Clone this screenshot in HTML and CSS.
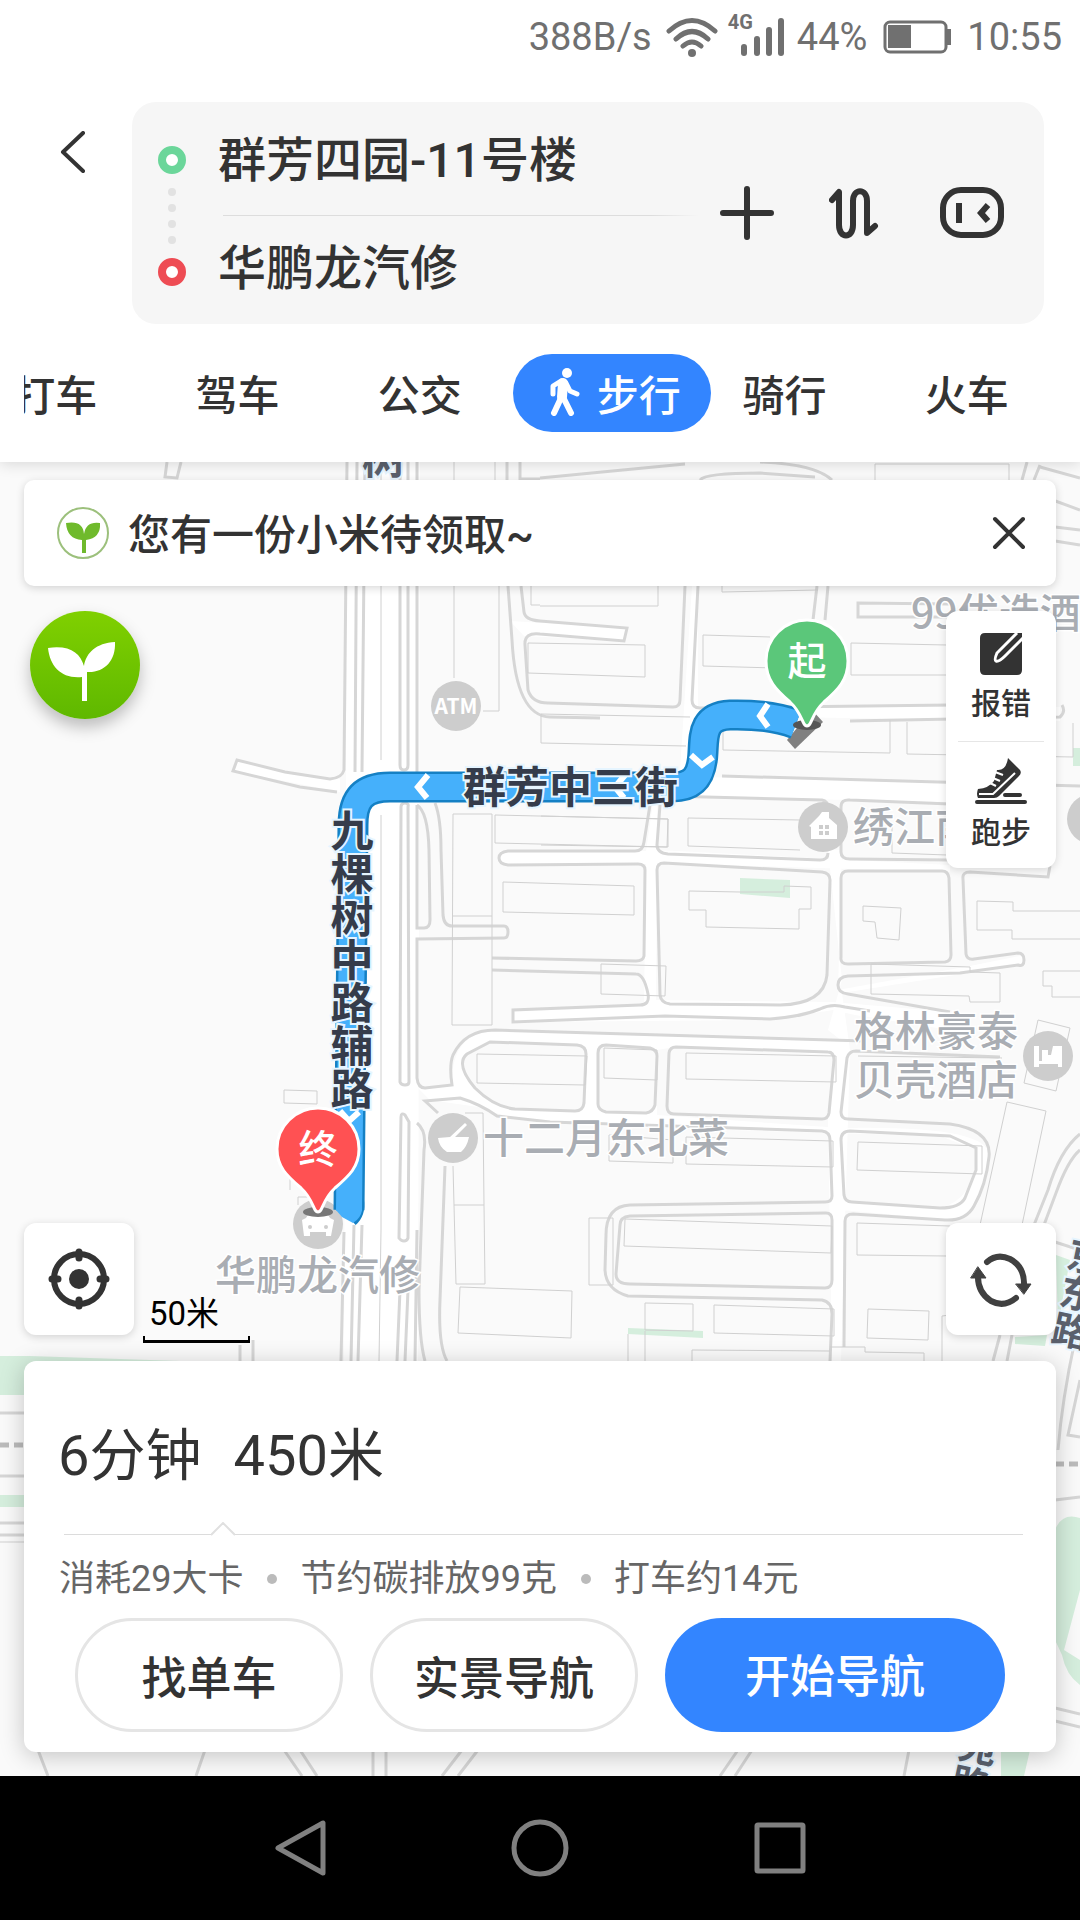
FILE: index.html
```
<!DOCTYPE html>
<html lang="zh-CN">
<head>
    <meta charset="UTF-8">
    <meta name="viewport" content="width=device-width, initial-scale=1.0">
    <title>步行路线</title>
    <link rel="stylesheet" href="styles.css">
</head>
<body>
    <header class="header">
        <div class="status">
            <span>388B/s</span>
            <svg class="wifi" width="52" height="40" viewBox="0 0 52 40" fill="none" stroke="#707070" stroke-width="5" stroke-linecap="round">
                <path d="M3 14Q26-7 49 14M10 22Q26 7 42 22M17 29Q26 21 35 29"/>
                <circle cx="26" cy="36" r="4" fill="#707070" stroke="none"/>
            </svg>
            <div class="signal">
                <b>4G</b>
                <svg width="44" height="38" viewBox="0 0 44 38" fill="#707070">
                    <rect x="0" y="26" width="6" height="12" rx="3"/>
                    <rect x="13" y="18" width="6" height="20" rx="3"/>
                    <rect x="25" y="9" width="6" height="29" rx="3"/>
                    <rect x="37" y="0" width="6" height="38" rx="3"/>
                </svg>
            </div>
            <span>44%</span>
            <svg class="battery" width="68" height="34" viewBox="0 0 68 34">
                <rect x="2" y="2" width="61" height="30" rx="5" fill="none" stroke="#707070" stroke-width="3"/>
                <path d="M5 5h23v23h-23zM64 9h4v16h-4z" fill="#707070"/>
            </svg>
            <span>10:55</span>
        </div>
        <div class="search">
            <button class="back" aria-label="返回">
                <svg width="26" height="42" viewBox="0 0 26 42" fill="none" stroke="#333" stroke-width="4" stroke-linecap="round" stroke-linejoin="round"><path d="M23 2L3 21L23 40"/></svg>
            </button>
            <div class="searchBox">
                <div class="points">
                    <i class="ring green"></i>
                    <i class="dot"></i><i class="dot"></i><i class="dot"></i><i class="dot"></i>
                    <i class="ring red"></i>
                </div>
                <div class="fields">
                    <input type="text" value="群芳四园-11号楼" aria-label="起点">
                    <div class="line"></div>
                    <input type="text" value="华鹏龙汽修" aria-label="终点">
                </div>
                <div class="actions">
                    <button aria-label="添加途经点">
                        <svg width="56" height="56" viewBox="0 0 56 56" stroke="#333" stroke-width="6" stroke-linecap="round"><path d="M28 4V52M4 28H52"/></svg>
                    </button>
                    <button aria-label="交换起终点">
                        <svg width="50" height="52" viewBox="0 0 50 52" fill="none" stroke="#333" stroke-width="6" stroke-linecap="round" stroke-linejoin="round"><path d="M3 13L10 5V38C10 52 24 52 24 38V14C24 1 38 1 38 14V46L46 39"/></svg>
                    </button>
                    <button aria-label="语音助手">
                        <svg width="66" height="52" viewBox="0 0 66 52" fill="none" stroke="#333" stroke-width="6"><rect x="4" y="3" width="58" height="45" rx="18"/><path d="M20 16V36M49 18L42 26L49 34"/></svg>
                    </button>
                </div>
            </div>
        </div>
        <nav class="tabs">
            <ul>
                <li><a href="#">打车</a></li>
                <li><a href="#">驾车</a></li>
                <li><a href="#">公交</a></li>
                <li><a href="#" class="active">
                    <svg width="30" height="48" viewBox="0 0 30 48" fill="none" stroke="#fff" stroke-linecap="round" stroke-linejoin="round"><circle cx="17" cy="5" r="5" fill="#fff" stroke="none"/><path d="M13 15L12 29" stroke-width="10"/><path d="M11 13L3 18V26M16 15L20 23L27 26" stroke-width="5"/><path d="M11 30L4 45M13 29L21 45" stroke-width="6"/></svg>
                    <span>步行</span>
                </a></li>
                <li><a href="#">骑行</a></li>
                <li><a href="#">火车</a></li>
            </ul>
        </nav>
    </header>

    <main class="map">
        <svg class="mapPic" viewBox="0 462 1080 1314" preserveAspectRatio="xMidYMin slice">
            <!-- 绿地 -->
            <g class="park">
                <path d="M740 878L790 880V898L740 894Z"/>
                <path d="M628 1328L703 1331V1338L628 1334Z"/>
                <path d="M0 1356H30L180 1361V1395H0ZM0 1495H24V1507H0Z"/>
                <path d="M1056 1255L1070 1260L1058 1325ZM1015 1337L1047 1335L1045 1346L1015 1344Z"/>
                <path d="M1055 1530Q1062 1512 1080 1518V1590L1064 1650L1080 1660V1685Q1066 1675 1062 1655L1055 1640ZM1001 1750H1030L1024 1776H1001ZM1073 748H1080V766H1073Z"/>
            </g>
            <!-- 白色路面 -->
            <g class="ground">
                <path d="M347 462L344 1361H418L420 462Z"/>
                <path d="M237 760L285 772L340 779V792L233 771ZM510 621L627 628L624 641L524 636ZM692 586H698V707L1060 707V721L715 716L698 777L950 782V802L657 796V850L950 865V872L657 863L656 1000L832 1002L950 1012V1030L855 1015L833 1010L770 1020L513 1022V1010L644 1004L646 864H500V851H646L654 796H420V770H680Z"/>
                <path d="M828 850H842L838 990L970 966L1024 955V964L842 993L850 1050L841 1361H832L828 1118L834 1055L680 1046L657 1050V1115L842 1128Q1000 1125 988 1160Q982 1220 950 1220L842 1210V1202L940 1208Q975 1200 977 1150L940 1136L660 1128Q510 1125 485 1108L430 1100L418 1088L452 1084Q451 1030 500 1030L842 1041L828 1030L842 980Z"/>
            </g>
            <!-- 环路里的地块 -->
            <path fill="#fafafa" d="M490 1042L577 1045Q586 1046 586 1054L584 1103Q583 1111 575 1111L515 1109Q494 1107 475 1088Q455 1064 467 1054ZM606 1045L650 1048Q657 1050 657 1056L655 1105Q653 1112 646 1113L606 1112Q598 1110 598 1104V1053Q598 1045 606 1045Z"/>
            <!-- 道路边线 -->
            <g class="road">
                <path d="M167 462L165 477L177 478L181 462M347 462L344 770Q342 778 330 779L285 772L237 760L233 771L300 787L337 792M357 462L355 772M365 462L362 772M400 462V765Q400 770 404 770T408 765V462M417 462V772M507 462V480M520 462V479H540"/>
                <path d="M508 586L512 640Q516 716 550 717L600 718M521 586L524 612Q525 620 540 621L627 628L624 641L540 634Q524 632 525 645L528 690Q532 703 548 703L673 707Q680 707 680 700L685 586M698 586L692 700Q692 708 700 708L950 705M850 721L1060 717Q1066 712 1062 705M817 586L813 620M828 586L825 620M950 604L858 603V617L950 617"/>
                <path d="M540 478L685 464M700 480Q705 473 760 473L815 477M760 462Q815 464 832 480M1027 462L1022 480M1040 465L1034 480M1040 467L1080 478M1050 499L1080 510M1055 527L1080 530M1055 541L1080 545"/>
                <path d="M722 776L1080 786M667 796L822 800Q828 801 828 808M650 805L644 842Q643 851 635 851H508Q499 852 499 858T508 865L638 864Q645 864 645 870L644 956Q643 961 636 961L492 958M660 805L657 845Q657 853 668 854L820 860Q828 860 828 853M950 804L850 800Q841 799 841 807V852Q841 859 850 859L950 860"/>
                <path d="M664 863L822 872Q830 873 830 880L827 975Q824 1004 780 1005L670 1004Q661 1003 660 995L657 870Q657 863 664 863ZM848 871H942Q948 871 949 878L951 955Q951 961 945 962L848 964Q840 964 841 957V878Q841 871 848 871ZM1050 866L1048 877L970 872Q962 872 963 879L966 954Q967 960 974 959L1018 953Q1024 953 1024 960T1018 965L960 973L848 976Q838 977 838 985Q838 993 848 994L950 1012"/>
                <path d="M492 970L636 974Q644 974 648 994Q650 1005 640 1005L513 1010V1022L665 1016L770 1019Q800 1017 820 1009Q832 1003 845 1007L870 1011"/>
                <path d="M401 807Q401 803 405 803T408 807L409 1082Q409 1085 405 1085T400 1082ZM417 805Q428 812 429 850L430 920Q430 928 424 928H417V805M435 803Q441 818 441 850L443 915Q444 926 452 926H504Q508 926 508 932T504 938L417 939V1078Q418 1088 425 1088L452 1085Q449 1065 453 1055Q465 1030 495 1030L865 1041"/>
                <path d="M490 1042L577 1045Q586 1046 586 1054L584 1103Q583 1111 575 1111L515 1109Q494 1107 475 1088Q455 1064 467 1054ZM606 1045L650 1048Q657 1050 657 1056L655 1105Q653 1112 646 1113L606 1112Q598 1110 598 1104V1053Q598 1045 606 1045ZM676 1047L828 1052Q834 1052 834 1060L829 1113Q828 1119 822 1119L674 1114Q667 1114 667 1106L669 1053Q670 1047 676 1047Z"/>
                <path d="M1000 1057L856 1051Q849 1051 847 1058L841 1112Q841 1119 848 1119L950 1124Q992 1130 989 1157Q986 1185 974 1206Q966 1221 945 1220L853 1214Q845 1214 845 1221L844 1347M850 1131L950 1136L976 1148V1170L965 1198Q960 1208 940 1208L852 1202Q845 1202 844 1195L841 1140Q841 1131 850 1131Z"/>
                <path d="M438 1113L425 1101L460 1098Q480 1104 497 1116L550 1122L822 1131Q830 1132 830 1140L832 1196Q832 1202 825 1202L630 1205Q606 1206 606 1235L605 1270Q606 1290 628 1296L822 1300Q832 1302 832 1314L830 1361M630 1216L826 1213Q832 1213 832 1220V1280Q832 1288 825 1288L630 1284Q616 1284 616 1274L620 1225Q620 1217 630 1216Z"/>
                <path d="M401 1117Q401 1112 405 1115L409 1122L408 1238Q407 1241 404 1241T399 1238ZM417 1123Q427 1131 424 1150L419 1290Q419 1340 425 1361M445 1166L440 1300Q438 1345 447 1361M344 1232L341 1361M354 1225L351 1361M362 1225L358 1361M400 1290L397 1361M408 1290L405 1361M417 1230L415 1361M240 1345V1361M253 1340V1361"/>
                <path d="M1080 1134Q1060 1150 1048 1190L1034 1225M1080 1150Q1068 1160 1056 1193L1044 1225M1055 1242L1080 1250M1000 1335L993 1361M1012 1335L1007 1361M1075 1340Q1062 1400 1058 1450M1080 1380L1068 1435L1080 1437M1055 1500L1080 1497M1055 1708L1080 1714M1055 1721L1080 1727"/>
                <path d="M0 1413H24M0 1476H24M0 1523H24M0 1535H24M38 1750L48 1776M205 1750L196 1776M284 1750L302 1776M300 1750L317 1776M373 1750V1776M386 1750V1776M462 1750L442 1776M478 1750L458 1776M738 1750L720 1776M752 1750L735 1776M909 1750L904 1776"/>
            </g>
            <path d="M0 1445H24M1055 1464H1080" stroke="#bbb" stroke-width="5" stroke-dasharray="9 5"/>
            <!-- 建筑 -->
            <g class="house">
                <path d="M381 462V760M381 815V1230L379 1361M454 462V678M495 462V480M499 586V711H483M540 606L658 606V586M722 586V592L818 590M531 480V605H540M528 643L645 645V677L528 673ZM770 637L703 635V666L775 668M851 643L947 645M851 643V675H947"/>
                <path d="M690 717L541 714V743L686 746M723 730V750L890 753V720M907 722V754L1073 757V723M541 816L668 819V847L541 845M800 820L688 818V846L800 850M892 825V853L947 855M875 480V464H1009V480"/>
                <path d="M689 891L740 892L784 892V886L811 887V909H799V929L706 927V910H689ZM863 906L901 908L899 940L877 938L875 922L863 921ZM1080 911H1013V902L977 901V930H1012V939H1080M871 964L970 967V972L1000 973V1002H970L969 996L871 994ZM1080 971H1043V986H1052V997H1080"/>
                <path d="M453 814L492 814V1025H452ZM452 916H492M495 815L668 819L667 847L495 843ZM503 882L634 886V915L503 912ZM601 964L666 966L665 996L601 994ZM477 1054L587 1056L585 1085L477 1083ZM604 1048L657 1050V1080L604 1078ZM686 1053L836 1056V1082L686 1079ZM858 1142L982 1146V1174L857 1170ZM686 1137L833 1141V1167L686 1164ZM609 1135V1161L673 1163V1140ZM858 1056L1002 1058"/>
                <path d="M1007 1102L1046 1111L1022 1225M1007 1102L980 1225M1038 1020L1070 1028L1056 1091L1024 1083ZM625 1219L832 1226L831 1253L624 1246ZM589 1218H613V1285H589ZM950 1226L857 1223V1255L947 1256M645 1303L693 1304V1331L645 1330ZM714 1305L834 1309V1336L714 1333ZM868 1309L929 1311L928 1340L867 1338ZM628 1334V1361M645 1331V1361M692 1361V1350L830 1351M830 1347H865V1352L924 1353V1361M942 1361V1316L950 1315"/>
                <path d="M284 1090L317 1091V1104L284 1103ZM453 1166L454 1205H484L483 1113H465M454 1205L456 1284H485L484 1205M460 1287L572 1291L571 1338L458 1333ZM290 1190V1175M298 1205V1197H310M0 1542H24"/>
            </g>
            <!-- 兴趣点 -->
            <g class="poi">
                <circle cx="456" cy="706" r="25"/><text class="atm" x="456" y="714">ATM</text>
                <circle cx="823" cy="827" r="25"/><path d="M809 826L819 816L822 812H829V818L837 825V839H811V827Z"/>
                <circle cx="1048" cy="1056" r="25"/><path d="M1034 1046H1039V1061H1042V1050H1048V1055H1051L1053 1046H1062V1067H1058V1064H1039V1067H1034Z"/>
                <circle cx="453" cy="1138" r="25"/><path d="M438 1138L450 1137L465 1123L467 1125L455 1137H469Q467 1147 461 1152H447Q439 1147 438 1138Z"/>
                <circle cx="318" cy="1224" r="25"/><path d="M306 1218L309 1213H327L330 1218L334 1220L331 1236H326V1232H310V1236H304L302 1220Z"/>
                <circle cx="1092" cy="819" r="25"/>
            </g>
            <g fill="#cdcdcd"><path d="M819 825h4v4h-4zM825 825h4v4h-4zM819 831h4v4h-4zM825 831h4v4h-4z"/><circle cx="310" cy="1227" r="2"/><circle cx="326" cy="1227" r="2"/></g>
            <g class="name">
                <text x="911" y="628">99优选酒店</text>
                <text x="853" y="842">绣江南</text>
                <text x="854" y="1046">格林豪泰</text>
                <text x="854" y="1095">贝壳酒店</text>
                <text x="483" y="1153">十二月东北菜</text>
                <text x="215" y="1290">华鹏龙汽修</text>
            </g>
            <!-- 路线 -->
            <path d="M787 740L795 749L823 722L812 710Z" fill="#808080"/>
            <g class="route">
                <path class="edge" d="M796 724Q770 714 730 715C703 716 704 735 703 752C702 775 695 787 672 787H390C362 787 353 800 353 825L349 1210"/>
                <path class="edge" d="M360 1200Q362 1214 353 1222" stroke-width="8"/>
                <path class="fill" d="M796 724Q770 714 730 715C703 716 704 735 703 752C702 775 695 787 672 787H390C362 787 353 800 353 825L349 1211"/>
                <path class="end" d="M336 1210H362Q361 1218 353 1223L342 1217Z"/>
                <path class="arrow" d="M768 704L760 716L768 727M691 755L702 765L713 757M428 775L418 787L427 798M625 775L615 787L624 798M340 1111L349 1121L359 1112"/>
            </g>
            <g class="street">
                <text x="463" y="803">群芳中三街</text>
                <text class="vertical" x="352" y="809">九棵树中路辅路</text>
                <text class="light" x="362" y="474">树</text>
                <text class="vertical light small" transform="translate(1091 1238) rotate(12)">京东路</text>
                <text class="vertical light small" transform="translate(982 1728) rotate(12)">苑路</text>
            </g>
            <!-- 起点终点 -->
            <ellipse cx="807" cy="725" rx="14" ry="5" fill="#555"/>
            <ellipse cx="318" cy="1212" rx="15" ry="5" fill="#777"/>
            <g class="pin">
                <path fill="#5bc77a" d="M807 726C802 726 803 714 790 702C776 690 766 680 766 661A41 41 0 0 1 848 661C848 680 838 690 824 702C811 714 812 726 807 726Z"/>
                <path fill="#ff5153" d="M318 1212C313 1212 314 1200 301 1188C287 1176 277 1167 277 1149A41 41 0 0 1 359 1149C359 1167 349 1176 335 1188C322 1200 323 1212 318 1212Z"/>
                <text x="807" y="675">起</text>
                <text x="318" y="1163">终</text>
            </g>
        </svg>

        <div class="notice">
            <svg width="54" height="54" viewBox="0 0 54 54"><circle cx="27" cy="27" r="25" fill="none" stroke="#9cc07c" stroke-width="2"/><path d="M10 17Q27 14 28 28Q30 15 44 17Q45 32 30 34V47H26V34Q11 33 10 17Z" fill="#6fba2c"/></svg>
            <p>您有一份小米待领取~</p>
            <button aria-label="关闭">
                <svg width="34" height="34" viewBox="0 0 34 34" stroke="#333" stroke-width="4" stroke-linecap="round"><path d="M3 3L31 31M31 3L3 31"/></svg>
            </button>
        </div>

        <div class="tools">
            <button class="sprout" aria-label="小米">
                <svg width="110" height="108" viewBox="0 0 110 108" fill="#fff"><path d="M18 37C40 34 50 42 54 55C56 42 66 32 85 31C86 50 74 62 57 61V90H52V66C32 68 20 56 18 37Z"/></svg>
            </button>
            <div class="panel">
                <button>
                    <svg width="44" height="44" viewBox="0 0 44 44"><path d="M6 1H43V38Q43 43 38 43H6Q1 43 1 38V6Q1 1 6 1Z" fill="#333"/><path d="M38 1L18 21Q15 28 17 29Q20 30 26 24L44 6" fill="none" stroke="#fff" stroke-width="3"/></svg>
                    <span>报错</span>
                </button>
                <button>
                    <svg width="52" height="48" viewBox="0 0 52 48" fill="#333"><path d="M33 1L45 13Q47 16 44 19L24 39Q22 41 19 41H3Q1 37 3 32Q14 31 19 24L22 13Q31 14 33 1Z"/><path d="M20 15L28 18M18 21L25 24M15 26L21 29M4 37H18L40 16" stroke="#fff" stroke-width="2" fill="none"/><path d="M30 38H45M2 45H50" stroke="#333" stroke-width="4" stroke-linecap="round"/></svg>
                    <span>跑步</span>
                </button>
            </div>
        </div>

        <div class="bottomTools">
            <button class="square" aria-label="定位">
                <svg width="62" height="62" viewBox="0 0 62 62" fill="none" stroke="#333" stroke-width="6"><circle cx="31" cy="31" r="25"/><circle cx="31" cy="31" r="10" fill="#333" stroke="none"/><path d="M31 4V10M31 52V58M4 31H10M52 31H58" stroke-width="7" stroke-linecap="round"/></svg>
            </button>
            <div class="scale">50米</div>
            <button class="square" aria-label="刷新">
                <svg width="62" height="62" viewBox="0 0 62 62" fill="none" stroke="#404040" stroke-width="6" stroke-linecap="round"><path d="M17 14Q27 5 40 11Q55 19 54 38M8 26Q7 44 21 53Q34 60 46 50"/><path d="M46 36H61L54 46ZM1 30H16L8 19Z" fill="#404040" stroke-width="1"/></svg>
            </button>
        </div>

        <section class="card">
            <h1><span>6分钟</span><span>450米</span></h1>
            <div class="rule">
                <svg width="24" height="14" viewBox="0 0 24 14"><path d="M0 13L12 1L24 13" fill="#fff" stroke="#e0e0e0" stroke-width="2"/></svg>
            </div>
            <ul class="info">
                <li>消耗29大卡</li>
                <li>节约碳排放99克</li>
                <li>打车约14元</li>
            </ul>
            <div class="btns">
                <button>找单车</button>
                <button>实景导航</button>
                <button class="start">开始导航</button>
            </div>
        </section>
    </main>

    <footer class="sysbar">
        <button aria-label="后退"><svg width="56" height="60" viewBox="0 0 56 60"><path d="M51 5V55L6 30Z"/></svg></button>
        <button aria-label="主屏幕"><svg width="60" height="60" viewBox="0 0 60 60"><circle cx="30" cy="30" r="26"/></svg></button>
        <button aria-label="最近任务"><svg width="56" height="60" viewBox="0 0 56 60"><rect x="5" y="7" width="46" height="46" rx="1"/></svg></button>
    </footer>
</body>
</html>
```

FILE: styles.css
```
*{
    margin: 0;
    padding: 0;
    box-sizing: border-box;
    list-style: none;
}
body{
    min-height: 100vh;
    display: flex;
    flex-direction: column;
    background: #fff;
    color: #333;
    font-family: Roboto,"Noto Sans CJK SC",sans-serif;
}
button{
    border: 0;
    background: none;
    color: inherit;
    font-family: inherit;
    display: flex;
    align-items: center;
    justify-content: center;
}
a{
    color: inherit;
    text-decoration: none;
}
svg{
    display: block;
    flex: none;
}

/* 顶部 */
.header{
    position: relative;
    z-index: 1;
    background: #fff;
    box-shadow: 0 2px 14px rgba(0,0,0,.14);
}
.status{
    height: 74px;
    padding-right: 18px;
    display: flex;
    align-items: center;
    justify-content: flex-end;
    color: #707070;
    font-size: 38px;
}
.wifi{
    margin: 0 10px 0 14px;
}
.signal{
    display: flex;
    align-items: flex-start;
    margin-right: 12px;
}
.signal b{
    font-size: 20px;
    line-height: 20px;
    margin: -6px -12px 0 0;
}
.battery{
    margin: 0 16px;
}
.search{
    display: flex;
    margin-top: 28px;
    padding-right: 36px;
}
.back{
    width: 132px;
    height: 100px;
    padding-left: 14px;
}
.searchBox{
    flex: 1;
    height: 222px;
    padding: 0 39px 0 26px;
    display: flex;
    border-radius: 24px;
    background: #f6f6f6;
}
.points{
    width: 60px;
    padding: 44px 32px 0 0;
    display: flex;
    flex-direction: column;
    align-items: center;
}
.ring{
    flex: none;
    width: 28px;
    height: 28px;
    border-radius: 50%;
    border: 8px solid #6bd69a;
    background: #fff;
    margin-bottom: 14px;
}
.red{
    border-color: #ee4c54;
    margin-top: 6px;
}
.dot{
    width: 8px;
    height: 8px;
    border-radius: 50%;
    background: #e2e2e2;
    margin-bottom: 8px;
}
.fields{
    flex: 1;
    min-width: 0;
    padding-top: 6px;
}
.fields input{
    display: block;
    width: 100%;
    height: 96px;
    border: 0;
    outline: 0;
    background: none;
    color: #333;
    font-family: Roboto,"Noto Sans CJK SC",sans-serif;
    font-size: 48px;
    font-weight: 500;
}
.fields .line{
    height: 1px;
    margin: 11px 0 0 5px;
    background: linear-gradient(to right,#ddd 90%,transparent);
}
.actions{
    display: flex;
    align-items: center;
    gap: 54px;
    padding-left: 20px;
}
.actions button:last-child{
    margin-left: 6px;
}
.tabs{
    margin: 0 22px 0 24px;
    padding: 30px 0;
    overflow: hidden;
}
.tabs ul{
    display: grid;
    grid-template-columns: repeat(6,1fr);
    margin-left: -60px;
}
.tabs a{
    height: 78px;
    display: flex;
    align-items: center;
    justify-content: center;
    padding-bottom: 2px;
    font-size: 42px;
    font-weight: 500;
}
.tabs .active{
    gap: 17px;
    margin: 0 -18px 0 2px;
    padding-left: 6px;
    border-radius: 39px;
    background: #3385ff;
    color: #fff;
}

/* 地图 */
.map{
    position: relative;
    flex: 1;
    padding: 18px 24px 24px;
    display: flex;
    flex-direction: column;
    background: #fafafa;
    overflow: hidden;
}
.map > div,.card{
    position: relative;
}
.mapPic{
    position: absolute;
    top: 0;
    left: 0;
    width: 100%;
    height: 100%;
    font-family: "Noto Sans CJK SC",sans-serif;
}
.park{
    fill: #d5eedd;
}
.ground{
    fill: #fff;
}
.road{
    fill: none;
    stroke: #d6d6d6;
    stroke-width: 3;
}
.house{
    fill: none;
    stroke: #d0d0d0;
    stroke-width: 1;
}
.poi circle{
    fill: #cdcdcd;
}
.poi path,.poi text{
    fill: #fff;
}
.atm{
    font-size: 21px;
    font-weight: 700;
    text-anchor: middle;
}
.name{
    fill: #a9adb3;
    stroke: #fff;
    stroke-width: 3;
    paint-order: stroke;
    font-size: 41px;
    font-weight: 500;
}
.route path{
    fill: none;
}
.route .edge{
    stroke: #1580c4;
    stroke-width: 31;
}
.route .edge + .edge{
    stroke-width: 8;
}
.route .fill{
    stroke: #45b0fb;
    stroke-width: 26;
}
.route .end{
    fill: #45b0fb;
}
.route .arrow{
    stroke: #fff;
    stroke-width: 6;
}
.street{
    fill: #353c4b;
    stroke: #e6f5ff;
    stroke-width: 4;
    paint-order: stroke;
    font-size: 43px;
    font-weight: 700;
}
.street .vertical{
    writing-mode: vertical-rl;
}
.street .light{
    fill: #5a606c;
}
.street .small{
    font-size: 38px;
}
.pin path{
    stroke: #fff;
    stroke-width: 3;
}
.pin text{
    fill: #fff;
    font-size: 39px;
    font-weight: 500;
    text-anchor: middle;
}
.notice{
    height: 106px;
    padding: 0 30px 0 32px;
    display: flex;
    align-items: center;
    gap: 18px;
    border-radius: 10px;
    background: #fff;
    box-shadow: 0 2px 8px rgba(0,0,0,.16);
}
.notice p{
    flex: 1;
    padding-bottom: 3px;
    font-size: 42px;
    font-weight: 500;
}
.tools{
    display: flex;
    justify-content: space-between;
    align-items: flex-start;
    margin-top: 25px;
}
.sprout{
    margin-left: 6px;
    border-radius: 50%;
    background: linear-gradient(#80d000,#5fb800);
    box-shadow: 0 8px 16px rgba(0,0,0,.25);
}
.panel{
    width: 110px;
    padding-top: 3px;
    border-radius: 12px;
    background: #fff;
    box-shadow: 0 2px 8px rgba(0,0,0,.14);
}
.panel button{
    width: 86px;
    height: 127px;
    margin: 0 auto;
    padding-top: 2px;
    flex-direction: column;
    gap: 6px;
    font-size: 30px;
    font-weight: 500;
    line-height: 44px;
}
.panel button + button{
    border-top: 1px solid #e6e6e6;
}
.bottomTools{
    display: flex;
    align-items: flex-end;
    margin-top: auto;
    padding-bottom: 26px;
}
.square{
    width: 110px;
    height: 112px;
    border-radius: 12px;
    background: #fff;
    box-shadow: 0 2px 8px rgba(0,0,0,.16);
}
.scale{
    width: 107px;
    margin: 0 auto -8px 9px;
    padding: 0 0 3px 6px;
    color: #000;
    font-size: 33px;
    line-height: 46px;
    background: linear-gradient(#000,#000) left bottom / 2px 4px no-repeat,linear-gradient(#000,#000) right bottom / 2px 4px no-repeat;
    border-bottom: 3px solid #000;
}
.card{
    height: 391px;
    border-radius: 12px;
    background: #fff;
    box-shadow: 0 4px 24px rgba(0,0,0,.22);
}
.card h1{
    padding: 53px 34px 0;
    display: flex;
    gap: 32px;
    font-size: 56px;
    line-height: 84px;
    font-weight: 400;
}
.rule{
    margin: 24px 33px 0 40px;
    padding-left: 147px;
    height: 13px;
    border-bottom: 1px solid #dcdcdc;
}
.info{
    display: flex;
    align-items: center;
    padding: 16px 35px 0;
    color: #666;
    font-size: 36px;
    line-height: 56px;
}
.info li{
    display: flex;
    align-items: center;
}
.info li + li::before{
    content: "";
    width: 10px;
    height: 10px;
    margin: 0 23px 0 24px;
    border-radius: 50%;
    background: #bbb;
}
.btns{
    display: grid;
    grid-template-columns: 268fr 268fr 340fr;
    gap: 27px;
    padding: 11px 51px 0;
}
.btns button{
    height: 114px;
    border: 3px solid #e5e5e5;
    border-radius: 57px;
    font-size: 45px;
    font-weight: 500;
}
.btns .start{
    border: 0;
    padding-bottom: 4px;
    background: #3385ff;
    color: #fff;
}

/* 系统导航 */
.sysbar{
    height: 144px;
    display: flex;
    align-items: center;
    justify-content: center;
    gap: 182px;
    background: #000;
}
.sysbar svg{
    fill: none;
    stroke: #808080;
    stroke-width: 5;
    stroke-linejoin: round;
}
```
